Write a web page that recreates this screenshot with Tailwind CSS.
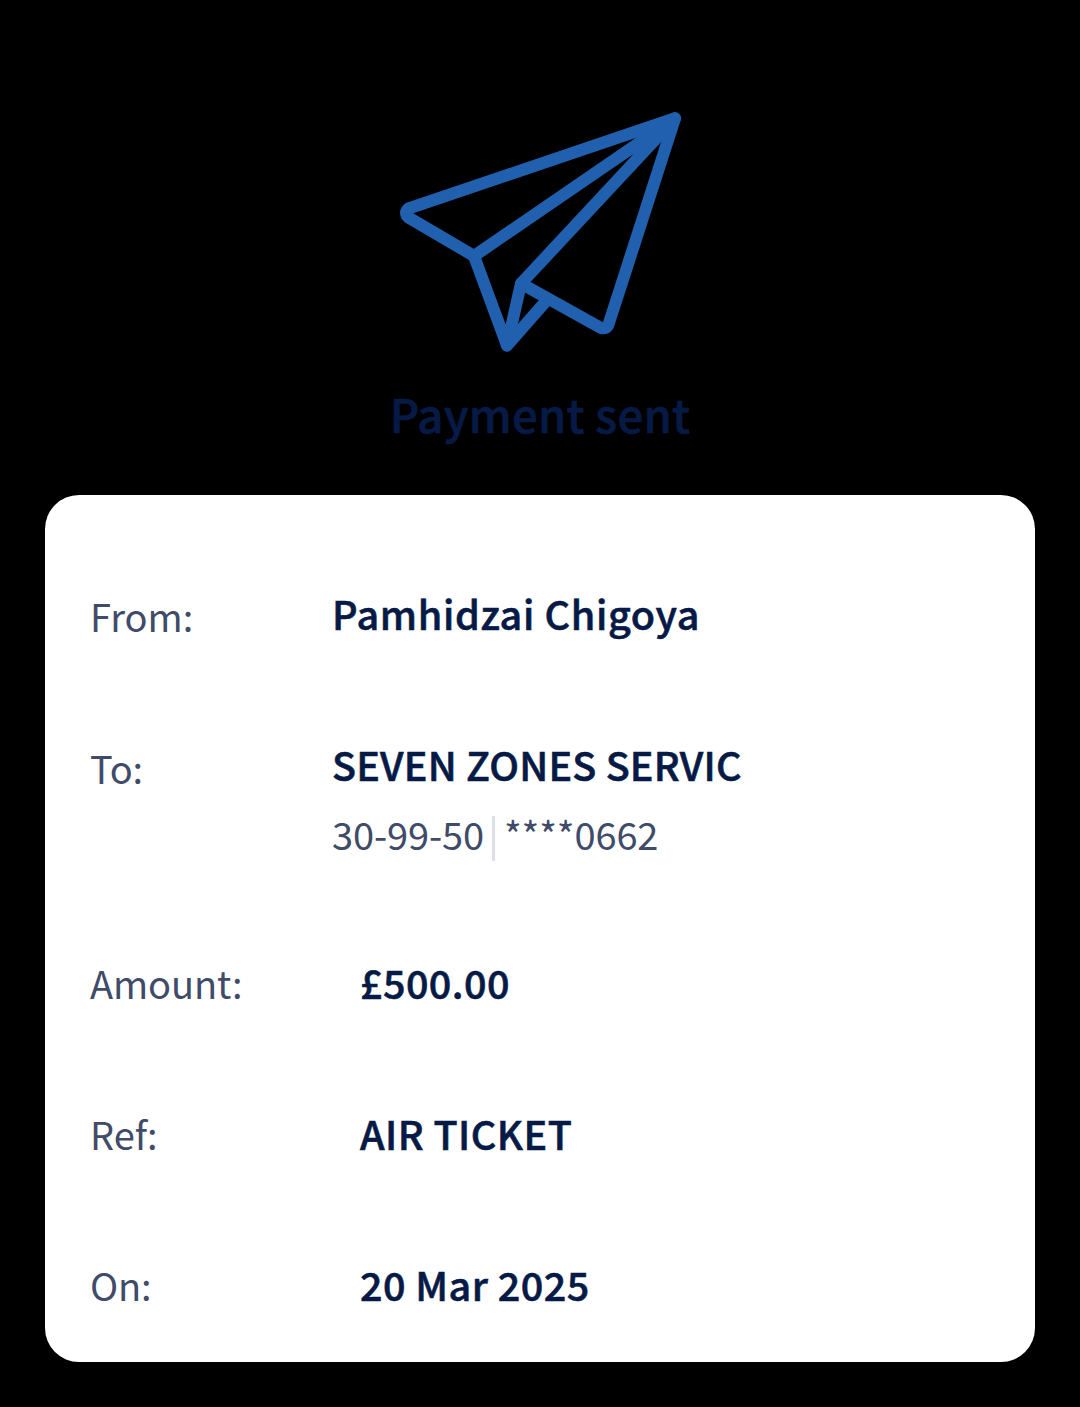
<!DOCTYPE html>
<html lang="en">
<head>
<meta charset="utf-8">
<title>Payment sent</title>
<script src="https://cdn.jsdelivr.net/npm/@tailwindcss/browser@4"></script>
</head>
<body class="bg-black font-['Noto_Sans_CJK_SC',sans-serif] text-[#061a45]">
<main class="flex h-[1407px] w-[1080px] flex-col items-center overflow-hidden px-[45px] pt-[100px]">
  <svg class="h-[260px] w-[300px] shrink-0" viewBox="390 100 300 260" fill="none" stroke="#2160ae" stroke-width="12" stroke-linejoin="round" stroke-linecap="round">
    <path d="M675 118.300 408.500 208.500Q403.500 213 408.500 217.500L474 256 507 345.500 521 283.500 601 328Q606.500 329.500 608.500 324.500Z"/>
    <path d="M675 118.300 474 256M675 118.300 521 283.500M507 345.500 547 300"/>
  </svg>
  <h1 class="mt-[17px] h-[72px] text-[45.500px] leading-[72px] font-medium tracking-[0.25px] whitespace-nowrap [-webkit-text-stroke:0.7px]">Payment sent</h1>
  <section class="mt-[46px] h-[867px] w-full shrink-0 rounded-[34px] bg-white px-[45px] pt-[88px]">
    <div class="flex h-[152px]"><span class="w-[242px] text-[38px] leading-[66px] text-[#404b69]">From:</span><span class="text-[39.500px] leading-[60px] font-medium tracking-[0.65px] [-webkit-text-stroke:0.6px]">Pamhidzai Chigoya</span></div>
    <div class="flex h-[215px]"><span class="w-[242px] text-[38px] leading-[66px] tracking-[-0.3px] text-[#404b69]">To:</span>
      <div><p class="text-[39.500px] leading-[58px] font-medium tracking-[0.2px] [-webkit-text-stroke:0.6px]">SEVEN ZONES SERVIC</p><p class="flex items-center text-[38px] leading-[82px] tracking-[-0.12px] text-[#404b69]">30-99-50<span class="mr-[9px] ml-[8px] h-[45px] w-[3px] translate-y-1 bg-[#dde0e6]"></span>****0662</p></div></div>
    <div class="flex h-[151px]"><span class="w-[270px] text-[38px] leading-[66px] tracking-[-0.1px] text-[#404b69]">Amount:</span><span class="text-[39.500px] leading-[64px] font-medium tracking-[0.43px] [-webkit-text-stroke:0.6px]">£500.00</span></div>
    <div class="flex h-[151px]"><span class="w-[270px] text-[38px] leading-[66px] text-[#404b69]">Ref:</span><span class="text-[39.500px] leading-[64px] font-medium tracking-[0.48px] [-webkit-text-stroke:0.6px]">AIR TICKET</span></div>
    <div class="flex"><span class="w-[270px] text-[38px] leading-[66px] tracking-[-0.2px] text-[#404b69]">On:</span><span class="text-[39.500px] leading-[64px] font-medium tracking-[0.48px] [-webkit-text-stroke:0.6px]">20 Mar 2025</span></div>
  </section>
</main>
</body>
</html>
